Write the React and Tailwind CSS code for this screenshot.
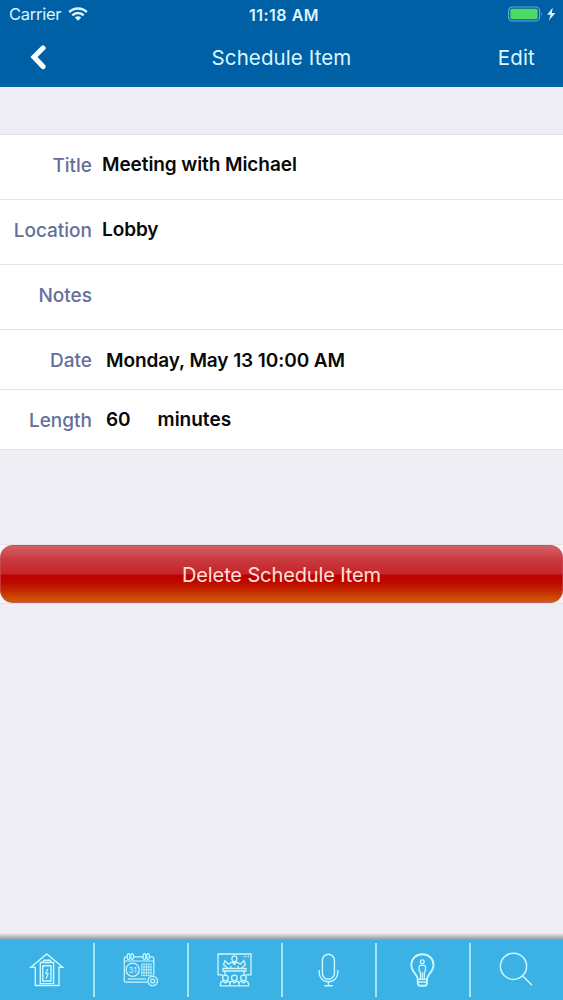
import React from 'react';

const rows = [
  { label: 'Title', value: 'Meeting with Michael', height: 'h-[65px]', pad: 'pl-[10px]', lift: 'pb-[4px]', labelLift: 'pb-[2px]' },
  { label: 'Location', value: 'Lobby', height: 'h-[65px]', pad: 'pl-[10px]', lift: 'pb-[4px]', labelLift: 'pb-[2px]' },
  { label: 'Notes', value: '', height: 'h-[65px]', pad: 'pl-[10px]', lift: 'pb-[4px]', labelLift: 'pb-px' },
  { label: 'Date', value: 'Monday, May 13 10:00 AM', height: 'h-[60px]', pad: 'pl-[14px]', lift: 'pt-[3px]', labelLift: 'pt-[3px]' },
  { label: 'Length', value: '60', unit: 'minutes', height: 'h-[60px]', pad: 'pl-[14px]', lift: 'pt-[2px]', labelLift: 'pt-[3px]' },
];

const Icon = ({ children, width = 1.4 }) => (
  <svg className="h-10 w-10 text-[#cbf8fd]" viewBox="0 0 40 40" fill="none" stroke="currentColor" strokeWidth={width}>
    {children}
  </svg>
);

const HomeIcon = () => (
  <Icon>
    <path d="M8.3 17.3V35.5H32V17.3H35.8L19.7 4L3.8 17.3H8.3" />
    <path d="M13.3 12.5H26.6V33.6H13.3zM15.8 15.8H24V31H15.8z" />
    <path d="M15.5 12.5L17 10.2H23L24.5 12.5M17.5 12.5H22.5" />
    <path d="M20.8 19L18.9 23.5H21L19.2 28.5" strokeWidth="1.2" />
  </Icon>
);

const CalendarIcon = () => (
  <Icon width={1.2}>
    <path d="M6 6.8H4.8Q3.3 6.8 3.3 8.3V30.7Q3.3 32.2 4.8 32.2H26.5M12.5 6.8H22M28.5 6.8H31.3Q32.8 6.8 32.8 8.3V25.5M3.3 11H32.8" />
    <g fill="#3cb1e6">
      <ellipse cx="7.6" cy="6.6" rx="1.4" ry="2.9" />
      <ellipse cx="11.2" cy="6.6" rx="1.4" ry="2.9" />
      <ellipse cx="23.4" cy="6.6" rx="1.4" ry="2.9" />
      <ellipse cx="27" cy="6.6" rx="1.4" ry="2.9" />
    </g>
    <circle cx="11.7" cy="19.8" r="6.6" />
    <text x="11.7" y="22.8" textAnchor="middle" fontSize="8" fill="currentColor" stroke="none" className="font-['Inter',sans-serif]">31</text>
    <path d="M20.7 14H30.2V25.7H20.7zM20.7 16.9H30.2M20.7 19.8H30.2M20.7 22.8H30.2M23 14V25.7M25.4 14V25.7M27.8 14V25.7" strokeWidth="0.8" />
    <path d="M6.7 29H25" />
    <circle cx="31.7" cy="31" r="4.7" strokeDasharray="2.2 0.4" strokeWidth="1.5" />
    <circle cx="31.7" cy="31" r="1.9" />
  </Icon>
);

const PresentationIcon = () => (
  <Icon width={1.3}>
    <path d="M8 24.8H3V4H36V24.8H30.5" />
    <path d="M28.5 6.5H34" strokeDasharray="1.2 1" />
    <ellipse cx="19.4" cy="8.8" rx="2.5" ry="2.9" />
    <path d="M12.5 18.3L8.5 14.5L10 10.7L13.3 14.2L16.2 12.4H22.6L25.5 14.2L29 10.7L30.5 14.5L26.5 18.3M15.8 18.2V15.8M23.2 18.2V15.8M17.5 12.5L19.4 14.5L21.3 12.5" />
    <path d="M8 18.5H31V21H8zM10 21V25.5M29 21V25.5" />
    <circle cx="10.4" cy="28" r="2.8" />
    <circle cx="19.4" cy="28" r="2.8" />
    <circle cx="28.5" cy="28" r="2.8" />
    <path d="M5.4 36V34Q5.4 31.6 8 31.2L10.4 33L12.8 31.2Q14.9 31.6 14.9 34V36M14.9 34Q14.9 31.6 17 31.2L19.4 33L21.8 31.2Q24 31.6 24 34V36M24 34Q24 31.6 26.1 31.2L28.5 33L30.9 31.2Q33.5 31.6 33.5 34V36M5 35.8H34" />
  </Icon>
);

const MicIcon = () => (
  <Icon>
    <rect x="13.4" y="4.2" width="12" height="25" rx="6" />
    <path d="M10.2 20V22.5C10.2 28 14.2 31.8 19.4 31.8S28.8 28 28.8 22.5V20M19.4 31.8V35.7M15.3 35.8H23.8" />
  </Icon>
);

const BulbIcon = () => (
  <Icon width={1.9}>
    <path d="M14.7 32.5V29C14.7 24.5 8.3 21.8 8.3 14.9C8.3 8.8 13 4.3 19.3 4.3S30.5 8.8 30.5 14.9C30.5 21.8 24 24.5 24 29V32.5Q24 35.7 21.5 35.7H17.2Q14.7 35.7 14.7 32.5Z" />
    <g strokeWidth="1.3">
      <circle cx="19.3" cy="11.8" r="1.9" />
      <path d="M17.4 29V22.3L16.1 20.8V16.8Q16.1 15.3 17.6 15.3H21Q22.5 15.3 22.5 16.8V20.8L21.3 22.3V29M19.3 22.5V29M15 29.3H23.8M15 32H23.8" />
    </g>
  </Icon>
);

const SearchIcon = () => (
  <Icon width={1.5}>
    <circle cx="16.5" cy="16.3" r="13.1" />
    <path d="M25.6 25.7L35 35.2" />
  </Icon>
);

const tabs = [HomeIcon, CalendarIcon, PresentationIcon, MicIcon, BulbIcon, SearchIcon];

const StatusBar = () => (
  <div className="grid h-[29px] grid-cols-[1fr_auto_1fr] items-center text-[#dcf6ff]">
    <div className="flex items-center gap-[7px] pl-[9px]">
      <span className="text-[16.5px] tracking-[-0.25px]">Carrier</span>
      <svg className="h-[14px] w-5 -translate-y-px" viewBox="0 0 20 14" fill="none" stroke="currentColor" strokeWidth="2.5">
        <path d="M1.2 5.2C6.2 0.3 13.8 0.3 18.8 5.2" />
        <path d="M4.3 8.3C7.5 5.2 12.5 5.2 15.7 8.3" />
        <path d="M10 13.7L6.8 10.6C8.6 8.9 11.4 8.9 13.2 10.6Z" fill="currentColor" stroke="none" />
      </svg>
    </div>
    <span className="pl-[5px] text-[16px] font-semibold tracking-[0.5px]">11:18 AM</span>
    <div className="flex items-center justify-end pr-[7px]">
      <svg className="h-4 w-12 -translate-y-px" viewBox="0 0 48 16">
        <rect x="0.6" y="1" width="31" height="14" rx="3.6" fill="none" stroke="#62a6d4" strokeWidth="1.2" />
        <rect x="2.3" y="2.8" width="27.4" height="10.4" rx="1.6" fill="#4cd964" />
        <path d="M33.2 5.8Q35 8 33.2 10.2Z" fill="#62a6d4" />
        <path d="M44.8 1.5L39.2 8.8H42.6L40.8 14.4L47.4 6.9H43.8Z" fill="currentColor" />
      </svg>
    </div>
  </div>
);

const App = () => {
  return (
    <div className="flex h-[1000px] w-[563px] flex-col overflow-hidden bg-[#efeef4] font-['Inter','Liberation_Sans',sans-serif]">
      <header className="h-[87px] bg-[#0060a5]">
        <StatusBar />
        <div className="grid h-[58px] grid-cols-[1fr_auto_1fr] items-center text-[#d9f7ff]">
          <svg className="ml-[29px] h-[26px] w-[18px] -translate-y-px" viewBox="0 0 18 26" fill="none" stroke="#f5ffff" strokeWidth="5.2" strokeLinecap="round">
            <path d="M14 4L5 13L14 22.5" />
          </svg>
          <h1 className="pt-px text-[20.5px] tracking-[0.1px]">Schedule Item</h1>
          <button className="justify-self-end pt-px pr-7 text-[20.5px] tracking-[0.2px]">Edit</button>
        </div>
      </header>

      {/* item details */}
      <main className="mt-[47px] border-t border-[#e2e2e6] bg-white text-[19px] font-semibold">
        {rows.map((row) => (
          <div key={row.label} className={`flex items-center border-b border-[#e3e4e7] ${row.height}`}>
            <span className={`w-[92px] text-right font-medium text-[#656f99] ${row.labelLift}`}>{row.label}</span>
            <span className={`tracking-[-0.08px] text-[#080808] ${row.pad} ${row.lift}`}>{row.value}</span>
            {row.unit && <span className="pt-[2px] pl-[27px] text-[#080808]">{row.unit}</span>}
          </div>
        ))}
      </main>

      <div className="mt-[94px] border-y border-[#e4e3e8] bg-[#f4f3f7]">
        <button className="block h-[58px] w-full rounded-[13px] border border-[#c65059]/60 bg-[linear-gradient(to_bottom,#d36066_0%,#c9393f_25%,#c52528_50%,#bd0000_52%,#bd0800_65%,#c62d00_82%,#d06000_100%)] pt-px text-[20px] tracking-[-0.12px] text-[#ffe1dc]">
          Delete Schedule Item
        </button>
      </div>

      <footer className="mt-auto">
        <div className="h-[7px] bg-linear-to-b from-[#efeef4] to-[#8e9499]" />
        <nav className="grid h-[60px] grid-cols-[94px_94px_94px_94px_94px_93px] bg-[#3cb1e6]">
          {tabs.map((TabIcon, i) => (
            <button key={i} className="flex items-center">
              <span className="flex flex-1 justify-center">
                <TabIcon />
              </span>
              {i < tabs.length - 1 && <span className="-mr-px h-[54px] w-[2px] bg-[#a4e4f8]" />}
            </button>
          ))}
        </nav>
      </footer>
    </div>
  );
};

export default App;
